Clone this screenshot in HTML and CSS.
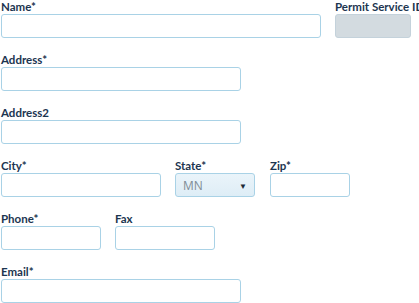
FILE: index.html
```html
<!doctype html>
<html lang="en">
	<head>
		<meta charset="UTF-8">
		<title>Contact form</title>
		<link rel="stylesheet" href="styles.css">
	</head>
	<body>
		<form class="formulario">
			<div class="linha">
				<div class="campo">
					<label>Name*</label>
					<input type="text" class="caixa w320">
				</div>
				<div class="campo">
					<label>Permit Service ID</label>
					<input type="text" class="caixa w76 travado" disabled>
				</div>
			</div>
			<div class="linha">
				<div class="campo">
					<label>Address*</label>
					<input type="text" class="caixa w240">
				</div>
			</div>
			<div class="linha">
				<div class="campo">
					<label>Address2</label>
					<input type="text" class="caixa w240">
				</div>
			</div>
			<div class="linha">
				<div class="campo">
					<label>City*</label>
					<input type="text" class="caixa w160">
				</div>
				<div class="campo">
					<label>State*</label>
					<div class="seletor">
						<span>MN</span>
						<span class="seta">&#9660;</span>
					</div>
				</div>
				<div class="campo campoZip">
					<label>Zip*</label>
					<input type="text" class="caixa w80">
				</div>
			</div>
			<div class="linha">
				<div class="campo">
					<label>Phone*</label>
					<input type="text" class="caixa w100">
				</div>
				<div class="campo">
					<label>Fax</label>
					<input type="text" class="caixa w100">
				</div>
			</div>
			<div class="linha">
				<div class="campo">
					<label>Email*</label>
					<input type="text" class="caixa w240">
				</div>
			</div>
		</form>
	</body>
</html>
```

FILE: styles.css
```css
body{
	margin: 0;
	font-family: Lato, "Open Sans", sans-serif;
	background: #ffffff;
}

.formulario{
	padding: 0 0 0 1px;
}

.linha{
	display: flex;
	gap: 14px;
	margin-bottom: 15px;
}

.campo{
	display: flex;
	flex-direction: column;
}

.campoZip{
	margin-left: 1px;
}

.campo label{
	font-size: 11.5px;
	font-weight: bold;
	color: #1c3550;
	line-height: 13px;
	height: 14px;
	white-space: nowrap;
}

.caixa{
	box-sizing: border-box;
	height: 24px;
	margin: 0;
	border: 1px solid #a9d2e6;
	border-radius: 3px;
	background: #ffffff;
	padding: 0 4px;
}

.travado{
	background: #d3dbe0;
	border-color: #c4d2db;
}

.w320{ width: 320px; }
.w240{ width: 240px; }
.w160{ width: 160px; }
.w100{ width: 100px; }
.w80{ width: 80px; }
.w76{ width: 76px; }

.seletor{
	box-sizing: border-box;
	width: 80px;
	height: 24px;
	border: 1px solid #a9d2e6;
	border-radius: 3px;
	background: linear-gradient(#eaf4fa, #deedf6);
	display: flex;
	align-items: center;
	justify-content: space-between;
	padding: 0 7px 0 7px;
	font-family: "Open Sans", sans-serif;
	font-size: 12px;
	color: #7f8c96;
}

.seta{
	font-size: 8px;
	color: #1c2a36;
}
```
